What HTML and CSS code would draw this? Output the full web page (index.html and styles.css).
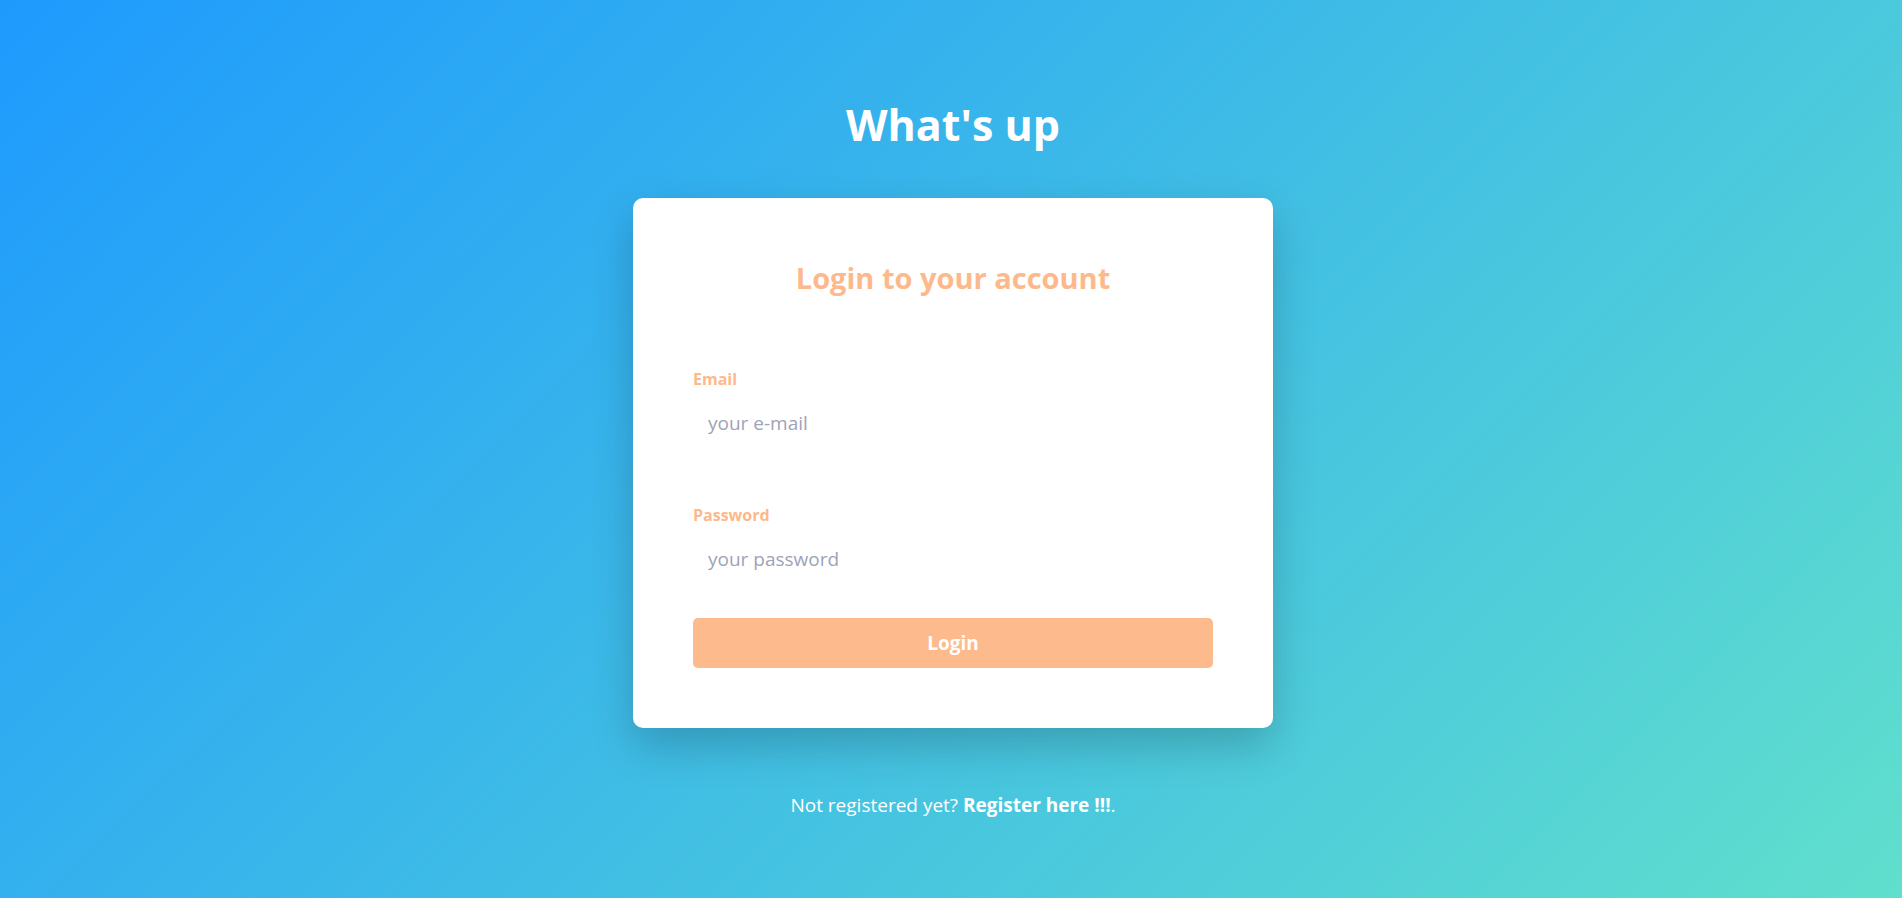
FILE: index.html
```html
<!DOCTYPE html>
<html lang="en">
<head>
<meta charset="utf-8">
<title>What's up</title>
<link rel="stylesheet" href="styles.css">
</head>
<body>
<main class="page">
  <h1 class="brand">What's up</h1>
  <form class="card">
    <h2 class="card-title">Login to your account</h2>
    <div class="field">
      <label class="field-label" for="email">Email</label>
      <input class="field-input" id="email" type="email" placeholder="your e-mail">
    </div>
    <div class="field field-last">
      <label class="field-label" for="password">Password</label>
      <input class="field-input" id="password" type="password" placeholder="your password">
    </div>
    <button class="btn" type="button">Login</button>
  </form>
  <p class="footer-note">Not registered yet? <a class="footer-link" href="#">Register here !!!</a>.</p>
</main>
</body>
</html>
```

FILE: styles.css
```css
* { box-sizing: border-box; }
html, body { margin: 0; padding: 0; }
body {
  min-height: 100vh;
  font-family: "Open Sans", "Noto Sans", sans-serif;
  background: linear-gradient(135deg, #1e9afe 0%, #60dfcd 100%);
  background-attachment: fixed;
}
.page {
  display: flex;
  flex-direction: column;
  align-items: center;
  padding-top: 97px;
  padding-left: 4px;
}
.brand {
  margin: 0;
  font-size: 43px;
  line-height: 56px;
  font-weight: 700;
  color: #fff;
}
.card {
  margin-top: 45px;
  width: 640px;
  background: #fff;
  border-radius: 10px;
  padding: 60px 60px 60px;
  display: flex;
  flex-direction: column;
  box-shadow: 0 18px 44px rgba(0, 0, 0, 0.2);
}
.card-title {
  margin: 0 0 70px;
  text-align: center;
  font-size: 29px;
  line-height: 40px;
  font-weight: 700;
  color: #fdb98b;
}
.field {
  display: flex;
  flex-direction: column;
  gap: 8px;
  margin-bottom: 56px;
}
.field-last { margin-bottom: 34px; }
.field-label {
  font-size: 16px;
  line-height: 22px;
  font-weight: 700;
  color: #fdb98b;
}
.field-input {
  height: 50px;
  border: 0;
  outline: none;
  padding: 0 15px;
  font-family: inherit;
  font-size: 19px;
  color: #555;
  background: transparent;
}
.field-input::placeholder { color: #9ea3b7; }
.btn {
  height: 50px;
  border: 0;
  border-radius: 5px;
  background: #fdbb8d;
  color: #fff;
  font-family: inherit;
  font-size: 19px;
  font-weight: 700;
  cursor: pointer;
}
.footer-note {
  margin: 64px 0 0;
  font-size: 19px;
  line-height: 26px;
  color: #fff;
}
.footer-link {
  color: #fff;
  font-weight: 700;
  text-decoration: none;
}
```
